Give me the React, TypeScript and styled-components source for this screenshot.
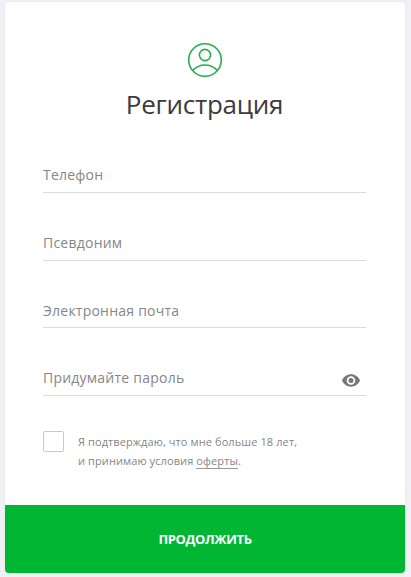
import React from "react";
import styled, { createGlobalStyle } from "styled-components";

const GlobalStyle = createGlobalStyle`
  *, *::before, *::after { box-sizing: border-box; }
  body {
    margin: 0;
    background: #f0f1f5;
    font-family: "Open Sans", "Noto Sans", sans-serif;
  }
`;

const Page = styled.main`
  height: 577px;
  padding: 2px 6px 4px 5px;
  overflow: hidden;
`;

const Card = styled.form`
  display: flex;
  flex-direction: column;
  width: 400px;
  height: 571px;
  background: #fff;
  border-radius: 4px;
  box-shadow: 0 0 2px rgba(40, 50, 70, 0.1);
  overflow: hidden;
`;

const Body = styled.div`
  flex: 1;
  display: flex;
  flex-direction: column;
  padding: 40px 39px 0 38px;
`;

const Header = styled.header`
  display: flex;
  flex-direction: column;
  align-items: center;
  height: 108px;
`;

const Title = styled.h1`
  margin: 8px 0 0;
  font-size: 26px;
  line-height: 36px;
  font-weight: 400;
  letter-spacing: -0.25px;
  color: #3c3c3c;
  white-space: nowrap;
`;

const Fields = styled.div`
  display: grid;
  grid-template-rows: 43px 43px 42px 43px;
  row-gap: 25px;
`;

const Field = styled.label`
  display: flex;
  align-items: flex-start;
  justify-content: space-between;
  padding-top: 15px;
  border-bottom: 1px solid #dcdcdc;
`;

const FieldLabel = styled.span`
  font-size: 14px;
  line-height: 20px;
  letter-spacing: 0.23px;
  color: #868686;
  white-space: nowrap;
`;

const EyeIcon = styled.svg`
  display: block;
  margin: 6px 6px 0 0;
`;

const Consent = styled.div`
  display: flex;
  align-items: flex-start;
  margin-top: 35px;
`;

const Checkbox = styled.span`
  flex: none;
  width: 21px;
  height: 21px;
  border: 1px solid #c9c9c9;
  border-radius: 2px;
`;

const ConsentText = styled.p`
  margin: 1px 0 0 14px;
  font-size: 11px;
  line-height: 19px;
  letter-spacing: 0.1px;
  color: #868686;
  white-space: nowrap;
`;

const OfferLink = styled.a`
  display: inline-block;
  line-height: 14px;
  border-bottom: 1px solid #999;
  color: inherit;
`;

const Submit = styled.button`
  flex: none;
  height: 68px;
  padding: 0;
  border: 0;
  background: #00b633;
  color: #fff;
  font-family: inherit;
  font-size: 13px;
  line-height: 18px;
  font-weight: 700;
  letter-spacing: -0.37px;
`;

export default function App() {
  return (
    <>
      <GlobalStyle />
      <Page>
        <Card>
          <Body>
            <Header>
              <svg width="36" height="36" viewBox="0 0 36 36" fill="none" stroke="#22b04b" strokeWidth="1.6">
                <circle cx="18" cy="18" r="16.3" />
                <circle cx="18" cy="13" r="5.6" />
                <path d="M5.600 28.400C9 24.800 13.200 23 18 23s9 1.800 12.400 5.400" />
              </svg>
              <Title>Регистрация</Title>
            </Header>
            <Fields>
              <Field><FieldLabel>Телефон</FieldLabel></Field>
              <Field><FieldLabel>Псевдоним</FieldLabel></Field>
              <Field><FieldLabel>Электронная почта</FieldLabel></Field>
              <Field>
                <FieldLabel>Придумайте пароль</FieldLabel>
                <EyeIcon width="18" height="13" viewBox="0 0 18 13">
                  <path
                    fill="#777"
                    fillRule="evenodd"
                    d="M9 .3C5 .3 1.500 2.800 0 6.500c1.500 3.700 5 6.200 9 6.200s7.500-2.500 9-6.200C16.500 2.800 13 .3 9 .3Zm0 10.500a4.300 4.300 0 1 1 0-8.600 4.300 4.300 0 0 1 0 8.600Zm0-1.800a2.500 2.500 0 1 0 0-5 2.500 2.500 0 0 0 0 5Z"
                  />
                </EyeIcon>
              </Field>
            </Fields>
            <Consent>
              <Checkbox role="checkbox" aria-checked="false" />
              <ConsentText>
                Я подтверждаю, что мне больше 18 лет,
                <br />
                и принимаю условия <OfferLink>оферты</OfferLink>.
              </ConsentText>
            </Consent>
          </Body>
          <Submit type="button">ПРОДОЛЖИТЬ</Submit>
        </Card>
      </Page>
    </>
  );
}
